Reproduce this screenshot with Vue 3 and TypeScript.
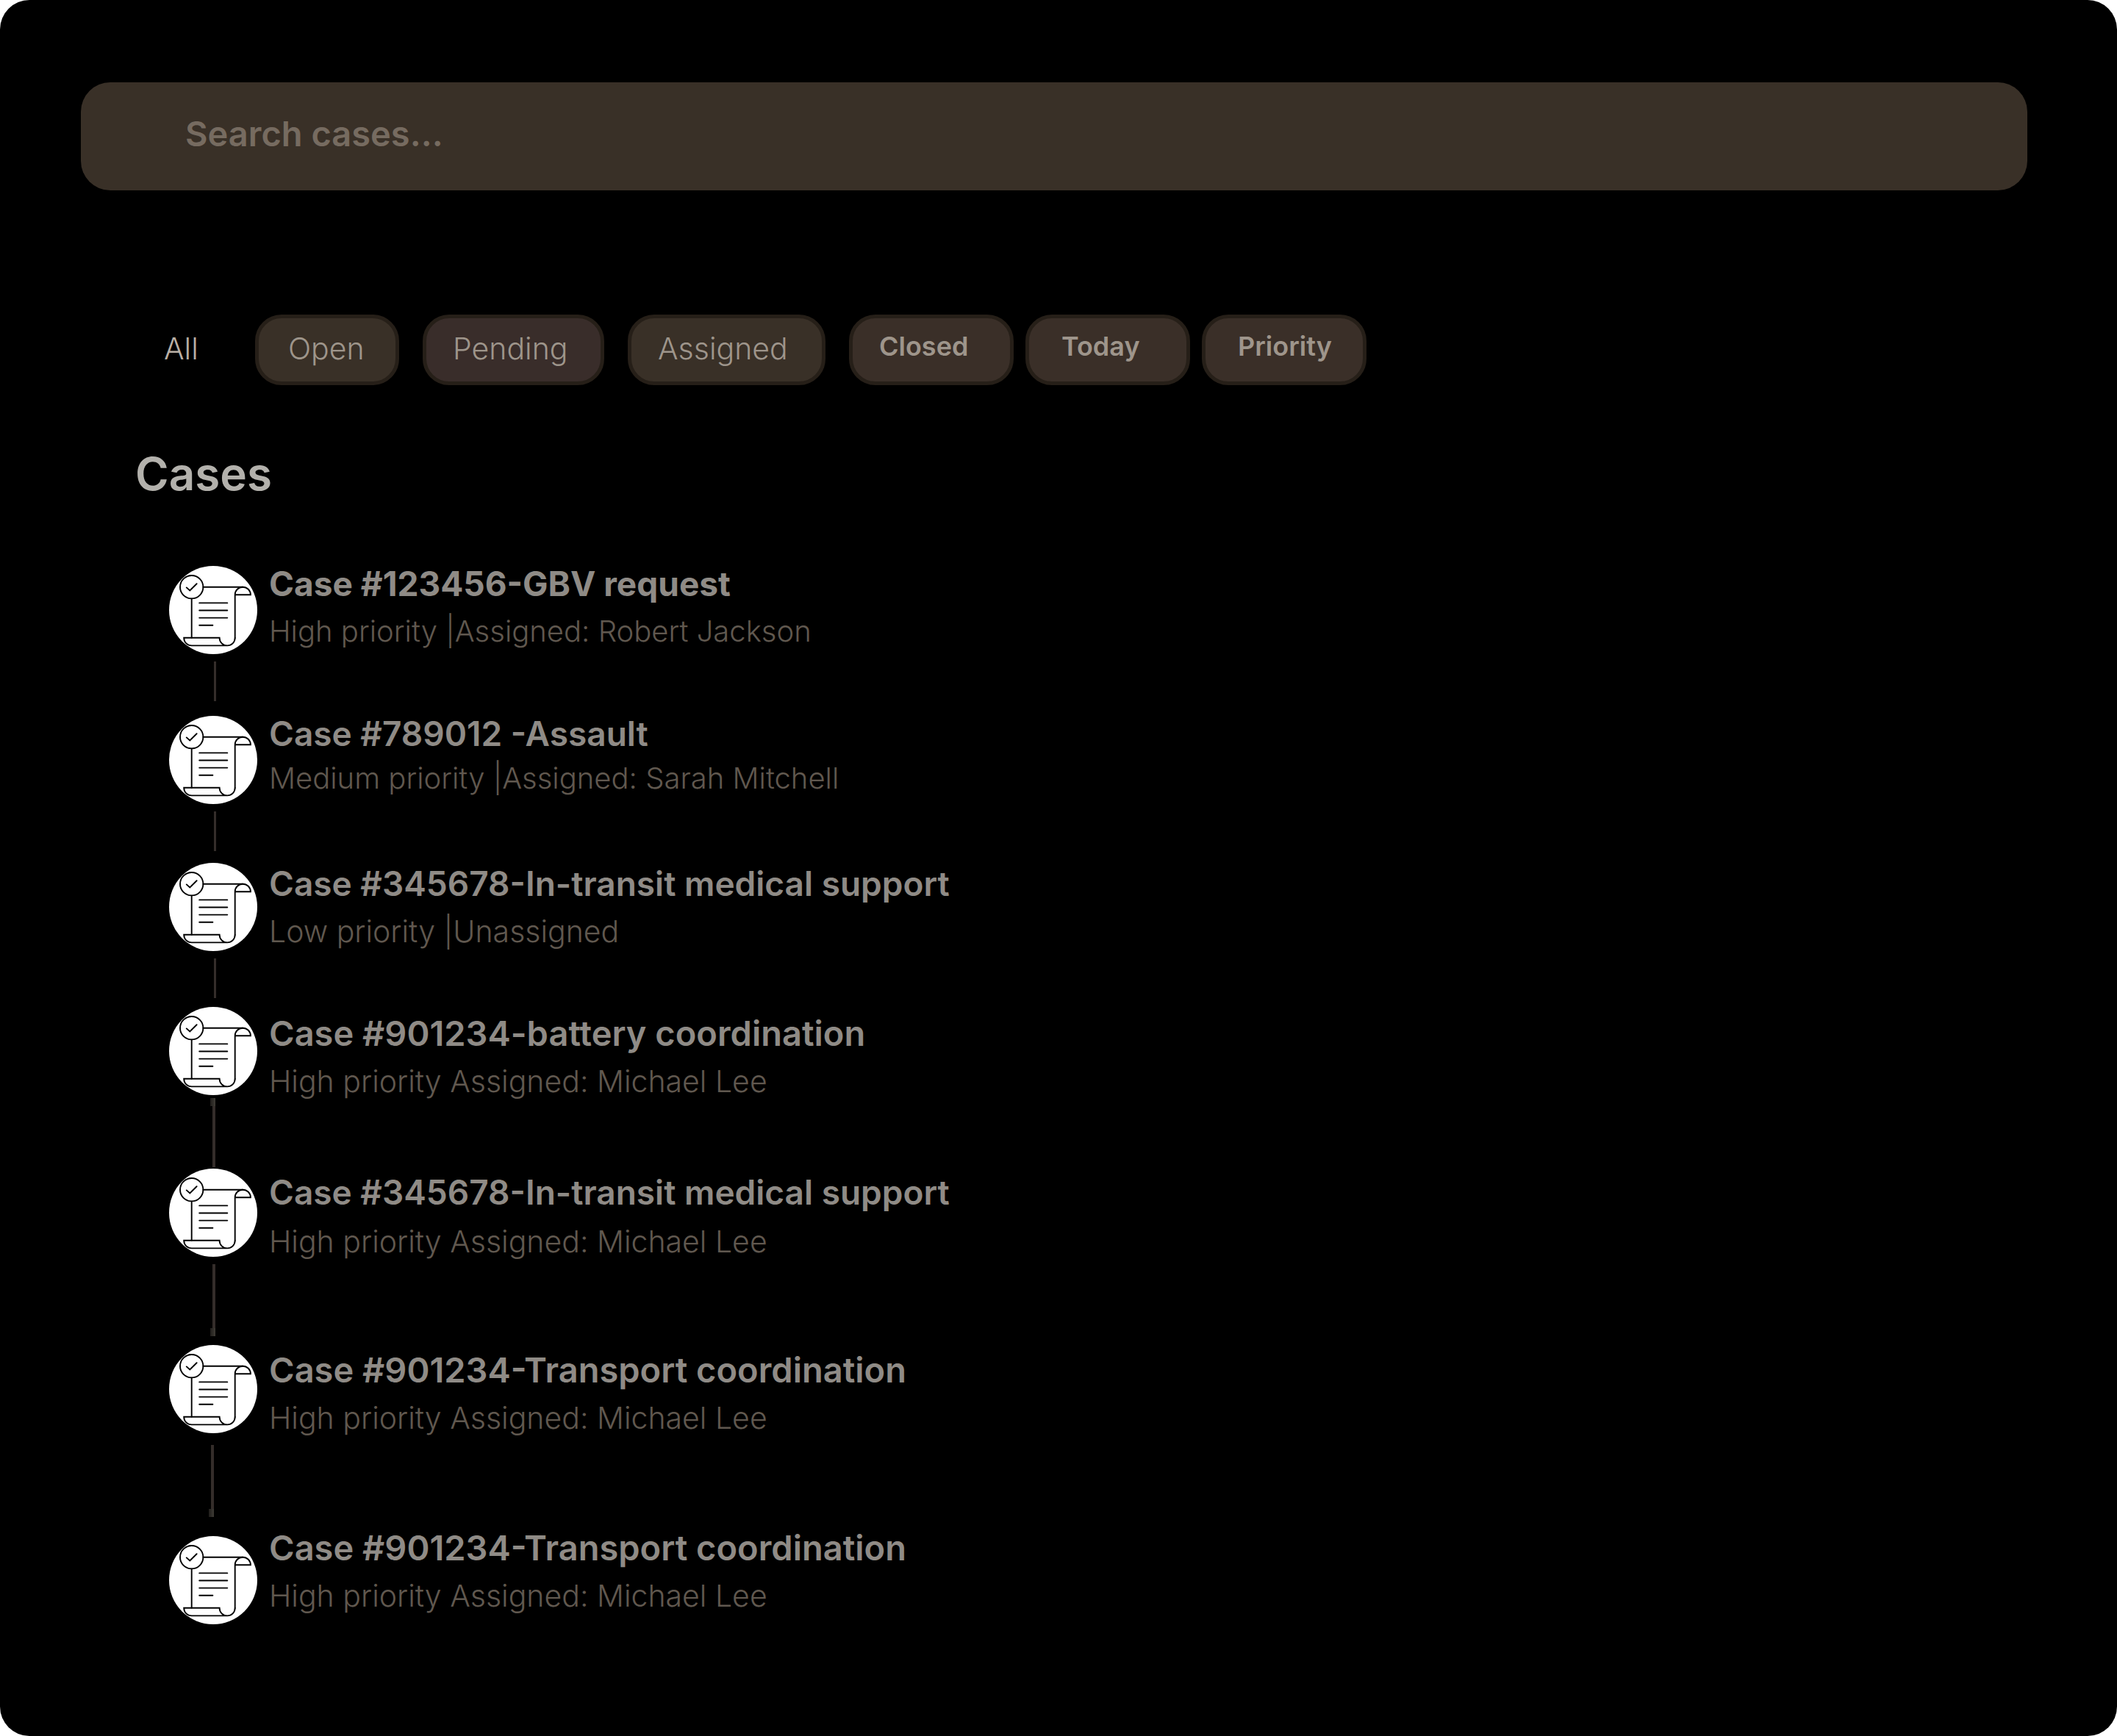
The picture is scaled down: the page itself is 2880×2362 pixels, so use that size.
<script setup lang="ts">
import { ref } from 'vue'

interface Filter {
  label: string
  kind: 'plain' | 'olive' | 'plum' | 'cocoa'
  width: number
  lead: number
}

interface CaseItem {
  title: string
  detail: string
  // vertical rhythm of the timeline row
  height: number
  inset: number
  gap: number
  style: string
  connector: string
}

const query = ref('')
const active = ref('All')

const filters: Filter[] = [
  { label: 'All', kind: 'plain', width: 129, lead: 32 },
  { label: 'Open', kind: 'olive', width: 196, lead: 40 },
  { label: 'Pending', kind: 'plum', width: 247, lead: 36 },
  { label: 'Assigned', kind: 'olive', width: 269, lead: 36 },
]

const quickFilters: Filter[] = [
  { label: 'Closed', kind: 'cocoa', width: 224, lead: 36 },
  { label: 'Today', kind: 'cocoa', width: 224, lead: 44 },
  { label: 'Priority', kind: 'cocoa', width: 224, lead: 44 },
]

const cases: CaseItem[] = [
  { title: 'Case #123456-GBV request', detail: 'High priority |Assigned: Robert Jackson', height: 204, inset: 8, gap: 24, style: 'strong', connector: 'short' },
  { title: 'Case #789012 -Assault', detail: 'Medium priority |Assigned: Sarah Mitchell', height: 200, inset: 8, gap: 20, style: '', connector: 'short' },
  { title: 'Case #345678-In-transit medical support', detail: 'Low priority |Unassigned', height: 196, inset: 12, gap: 24, style: 'large-detail', connector: 'short' },
  { title: 'Case #901234-battery coordination', detail: 'High priority Assigned: Michael Lee', height: 220, inset: 20, gap: 24, style: 'large-title large-detail', connector: 'dotted top' },
  { title: 'Case #345678-In-transit medical support', detail: 'High priority Assigned: Michael Lee', height: 240, inset: 16, gap: 26, style: 'large-detail', connector: 'dotted bottom' },
  { title: 'Case #901234-Transport coordination', detail: 'High priority Assigned: Michael Lee', height: 260, inset: 18, gap: 24, style: 'large-title large-detail', connector: 'dotted bottom low' },
  { title: 'Case #901234-Transport coordination', detail: 'High priority Assigned: Michael Lee', height: 120, inset: 0, gap: 24, style: 'large-title large-detail', connector: '' },
]
</script>

<template>
  <main class="page">
    <input v-model="query" class="search" type="text" placeholder="Search cases..." aria-label="Search cases" />

    <nav class="filters" aria-label="Case filters">
      <div class="group">
        <button
          v-for="f in filters"
          :key="f.label"
          type="button"
          class="chip"
          :class="f.kind"
          :style="{ minWidth: f.width + 'px', paddingLeft: f.lead + 'px' }"
          :aria-pressed="active === f.label"
          @click="active = f.label"
        >{{ f.label }}</button>
      </div>
      <div class="group tight">
        <button
          v-for="f in quickFilters"
          :key="f.label"
          type="button"
          class="chip"
          :class="f.kind"
          :style="{ minWidth: f.width + 'px', paddingLeft: f.lead + 'px' }"
          :aria-pressed="active === f.label"
          @click="active = f.label"
        >{{ f.label }}</button>
      </div>
    </nav>

    <h1 class="heading">Cases</h1>

    <ol class="timeline">
      <li v-for="(c, i) in cases" :key="i" class="row" :class="c.style" :style="{ minHeight: c.height + 'px' }">
        <div class="rail">
          <svg class="badge" viewBox="0 0 120 120" aria-hidden="true">
            <circle cx="60" cy="60" r="60" fill="#fff" />
            <g fill="none" stroke="#000" stroke-width="1.9" stroke-linecap="round" stroke-linejoin="miter">
              <circle cx="30.7" cy="28.7" r="15.7" />
              <path d="M23.8 29.4 28.3 33.4 37.6 24.2" />
              <path d="M46.4 28.7H100.4" />
              <path d="M30.7 44.6V97.7" />
              <path d="M89.7 98V39.2C89.7 33.4 94.4 28.7 100.3 28.7C106.2 28.7 110.9 33.4 110.9 39.2H89.7" />
              <path d="M89.7 98C89.7 103.9 85 108.4 79.2 108.4C73.3 108.4 68.6 103.9 68.6 97.7H20.2C20.2 103.9 24.9 108.4 30.7 108.4H79.2" />
              <path d="M41.2 50.4H79.3M41.2 60.5H79.3M41.2 70.6H79.3M41.2 80.8H59.4" />
            </g>
          </svg>
          <span v-if="c.connector" class="connector" :class="c.connector"></span>
        </div>
        <div class="text" :style="{ paddingTop: c.inset + 'px', rowGap: c.gap + 'px' }">
          <h2 class="title">{{ c.title }}</h2>
          <p class="detail">{{ c.detail }}</p>
        </div>
      </li>
    </ol>
  </main>
</template>

<style>
body {
  margin: 0;
  background: #fff;
}
</style>

<style scoped>
.page {
  box-sizing: border-box;
  min-height: 100vh;
  padding: 112px 122px 120px 110px;
  border-radius: 40px;
  background: #000;
  font-family: Inter, "Liberation Sans", sans-serif;
}

.search {
  display: block;
  box-sizing: border-box;
  width: 100%;
  height: 147px;
  padding: 0 142px 8px;
  border: 0;
  border-radius: 40px;
  outline: 0;
  background: #393027;
  color: #b3aaa0;
  font: 600 47px/60px Inter, "Liberation Sans", sans-serif;
}

.search::placeholder {
  color: #766b60;
  opacity: 1;
}

.filters {
  display: flex;
  gap: 32px;
  margin: 169px 0 0 76px;
}

.group {
  display: flex;
  gap: 32px;
}

.group.tight {
  gap: 16px;
}

.chip {
  box-sizing: border-box;
  height: 96px;
  padding: 0 0 4px;
  border: 5px solid #261f18;
  border-radius: 36px;
  color: #9e958b;
  font: 300 41px/48px Inter, "Liberation Sans", sans-serif;
  text-align: left;
  white-space: nowrap;
  cursor: pointer;
}

.plain {
  border-color: transparent;
  background: transparent;
  color: #b9afa5;
}

.olive {
  background: #393027;
}

.plum {
  background: #392d2a;
}

.cocoa {
  padding-bottom: 10px;
  background: #3a2f28;
  font-weight: 600;
  font-size: 36px;
}

.heading {
  margin: 84px 0 0 74px;
  color: #b3b1ac;
  font-size: 62px;
  font-weight: 600;
  line-height: 74px;
}

.timeline {
  margin: 88px 0 0 120px;
  padding: 0;
  list-style: none;
}

.row {
  display: flex;
  gap: 16px;
}

.rail {
  display: flex;
  flex: none;
  flex-direction: column;
  align-items: center;
  width: 120px;
}

.badge {
  display: block;
  flex: none;
  width: 120px;
  height: 120px;
}

.connector {
  width: 3px;
  height: 54px;
  margin: 10px 0 0 5px;
  background: #342d2a;
}

.dotted {
  display: flex;
  flex-direction: column;
  align-items: flex-end;
  width: 4px;
  height: 98px;
  margin-left: 2px;
}

.top {
  height: 94px;
  margin-top: 4px;
}

.bottom {
  justify-content: flex-end;
}

.low {
  margin: 16px 2px 0 0;
}

.dotted::before {
  flex: none;
  width: 7px;
  height: 11px;
  background: linear-gradient(90deg, #1f1d1a, #3f3c36);
  content: "";
}

.text {
  display: flex;
  flex-direction: column;
}

.title,
.detail {
  margin: 0;
  white-space: nowrap;
}

.title {
  color: #8f8b86;
  font-size: 46px;
  font-weight: 600;
  line-height: 32px;
}

.detail {
  color: #60584f;
  font-size: 40px;
  font-weight: 300;
  line-height: 50px;
}

.strong .title {
  font-weight: 700;
}

.large-title .title {
  font-size: 47px;
}

.large-detail .detail {
  font-size: 41px;
}
</style>
